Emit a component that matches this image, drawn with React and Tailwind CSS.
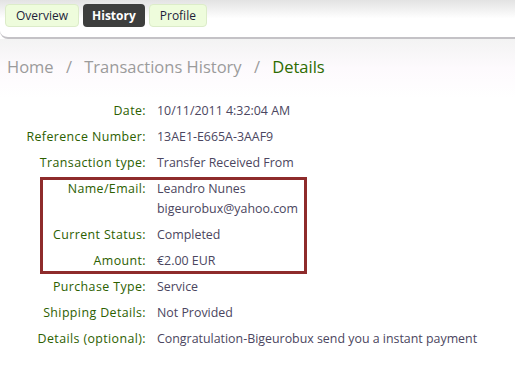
import React from 'react';

const rows = [
  { label: 'Date:', value: '10/11/2011 4:32:04 AM' },
  { label: 'Reference Number:', value: '13AE1-E665A-3AAF9' },
  { label: 'Transaction type:', value: 'Transfer Received From' },
];

const boxed = [
  { label: 'Name/Email:', value: ['Leandro Nunes', 'bigeurobux@yahoo.com'] },
  { label: 'Current Status:', value: ['Completed'] },
  { label: 'Amount:', value: ['€2.00 EUR'] },
];

const after = [
  { label: 'Purchase Type:', value: 'Service' },
  { label: 'Shipping Details:', value: 'Not Provided' },
  { label: 'Details (optional):', value: 'Congratulation-Bigeurobux send you a instant payment' },
];

// one label/value line, label column ends at x=146
const Row = ({ label, children, labelWidth = 'w-[146px]' }) => (
  <div className="flex py-[3px] leading-5">
    <div className={`${labelWidth} shrink-0 text-right text-[#2c6000] tracking-[0.4px]`}>{label}</div>
    <div className="ml-[11px] text-[#4b4660]">{children}</div>
  </div>
);

const Tab = ({ children, active, pad }) => (
  <div
    className={
      active
        ? `h-[23px] ${pad} flex items-center rounded-[4px] bg-[#3d3e3d] text-white font-bold`
        : `h-[23px] ${pad} flex items-center rounded-[4px] bg-[#eefcdc] border border-[#dcecc9] text-[#1d1d3a]`
    }
  >
    {children}
  </div>
);

export default function App() {
  return (
    <div className="w-[515px] h-[373px] overflow-hidden bg-white text-[12.4px]" style={{ fontFamily: '"Open Sans", "DejaVu Sans", sans-serif' }}>
      {/* tab strip */}
      <div className="h-[39px] bg-gradient-to-b from-[#e3e3e3] via-white to-white rounded-bl-[8px] border-b-2 border-[#c4c2c6] pt-[4px] pl-[5px]">
        <div className="flex gap-[4px] text-[12px]">
          <Tab pad="px-[10px]">Overview</Tab>
          <Tab active pad="px-[9px]">History</Tab>
          <Tab pad="px-[10px]">Profile</Tab>
        </div>
      </div>

      <div className="bg-gradient-to-b from-[#f3f3f3] via-[#fdfafd] to-white">
        {/* breadcrumb */}
        <div className="pl-[7px] pt-[16px] h-[59px] text-[16.5px] text-[#9b9b9b]">
          Home <span className="mx-[8px]">/</span> Transactions History <span className="mx-[8px]">/</span>{' '}
          <span className="text-[#2d6c00]">Details</span>
        </div>
      </div>

      <div>
        {rows.map((r) => (
          <Row key={r.label} label={r.label}>{r.value}</Row>
        ))}

        <div className="ml-[40px] w-[267px] mt-px border-[3px] border-[#8e2b2b]">
          <div className="-mt-1 -mb-[3px]">
            {boxed.map((r) => (
              <Row key={r.label} label={r.label} labelWidth="w-[103px]">
                {r.value.map((v) => (
                  <div key={v}>{v}</div>
                ))}
              </Row>
            ))}
          </div>
        </div>

        {after.map((r) => (
          <Row key={r.label} label={r.label}>{r.value}</Row>
        ))}
      </div>
    </div>
  );
}
